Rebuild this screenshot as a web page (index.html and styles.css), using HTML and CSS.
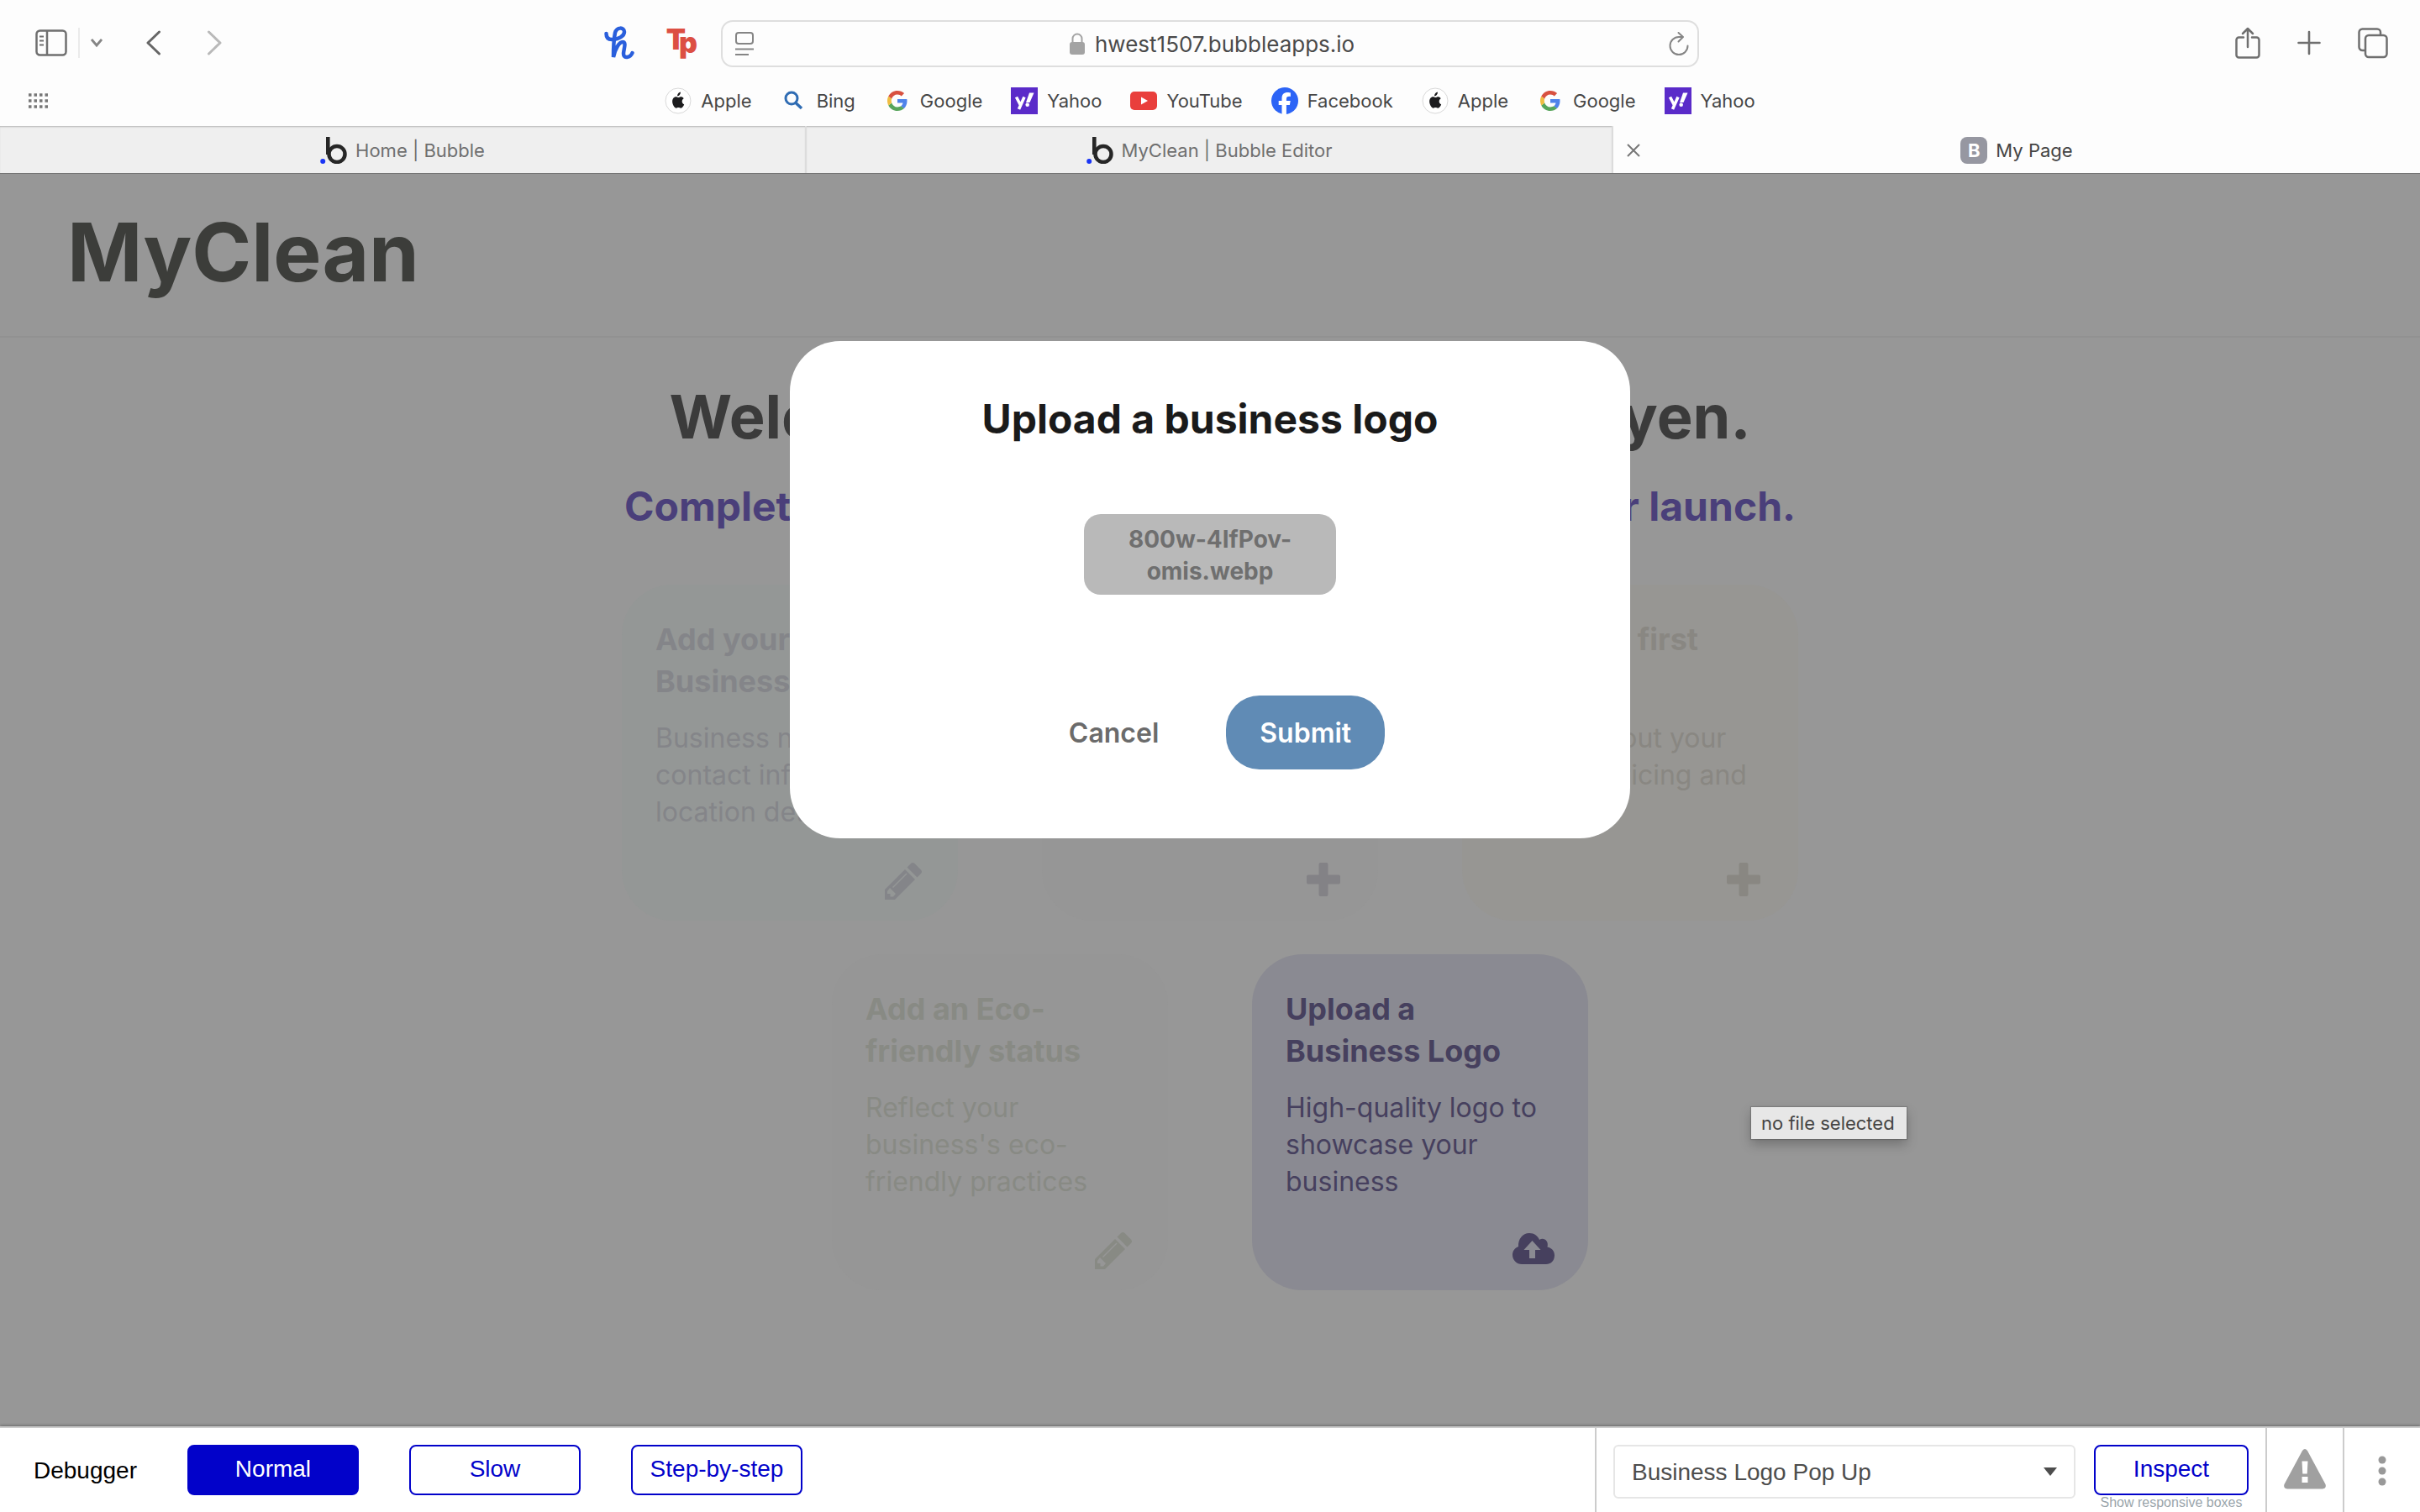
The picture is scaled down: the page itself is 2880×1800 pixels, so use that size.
FILE: index.html
```html
<!DOCTYPE html>
<html lang="en">
<head>
<meta charset="utf-8">
<meta name="viewport" content="width=device-width, initial-scale=1">
<title>My Page</title>
<link rel="stylesheet" href="styles.css">
</head>
<body>
<svg class="defs" width="0" height="0" aria-hidden="true">
  <symbol id="apple" viewBox="0 0 32 32">
    <circle cx="16" cy="16" r="15" fill="#fff" stroke="#d8d8d8" stroke-width="1"/>
    <path fill="#1c1c1e" d="M18.9 5.5c.2 1.400-.4 2.600-1.100 3.500-.7.8-1.700 1.400-2.700 1.300-.1-1.300.5-2.500 1.200-3.300.7-.8 1.800-1.400 2.600-1.500zM22.700 13.300c-1.400.9-2 2-2 3.400 0 1.600.9 2.900 2.500 3.500-.5 1.500-1.600 3.200-2.700 4-.9.7-1.800.4-2.700.1-1-.4-1.800-.4-2.800 0-1 .4-1.800.6-2.700-.2-3-2.700-4.200-8-2.100-11 1.300-1.900 3.400-2.200 5-1.400.9.4 1.500.4 2.400 0 1.800-.8 3.900-.4 5.100 1.600z"/>
  </symbol>
  <symbol id="bing" viewBox="0 0 32 32">
    <circle cx="13" cy="13" r="7" fill="none" stroke="#2f6cb3" stroke-width="3"/>
    <path d="M18 18.500l7 6.500" stroke="#2f6cb3" stroke-width="3.500"/>
  </symbol>
  <symbol id="google" viewBox="-4 -4 32 32">
    <path fill="#4f83ea" d="M23.500 12.300c0-.9-.1-1.500-.2-2.300H12v4.500h6.500c-.2 1.200-.9 2.700-2.400 3.800l3.700 2.900c2.300-2.100 3.700-5.200 3.700-8.900z"/>
    <path fill="#57a55b" d="M12 24c3.200 0 6-1.100 7.900-2.900l-3.800-2.900c-1 .7-2.400 1.200-4.100 1.200-3.200 0-5.800-2.100-6.800-5l-3.900 3C3.300 21.300 7.300 24 12 24z"/>
    <path fill="#f0bd42" d="M5.200 14.400c-.2-.8-.4-1.600-.4-2.400s.1-1.600.4-2.400L1.300 6.600C.5 8.200 0 10.100 0 12s.5 3.800 1.300 5.400z"/>
    <path fill="#d85140" d="M12 4.600c2.300 0 3.800 1 4.700 1.800l3.400-3.300C18 1.200 15.200 0 12 0 7.300 0 3.300 2.700 1.300 6.600l3.900 3c1-2.900 3.600-5 6.800-5z"/>
  </symbol>
  <symbol id="yahoo" viewBox="0 0 32 32">
    <rect width="32" height="32" fill="#5a2bc9"/>
    <path fill="none" stroke="#fff" stroke-width="3.600" d="M6.500 11.500l4.700 9M16 11.500L9.500 26"/>
    <path fill="#fff" d="M22 6.500h5.500l-5 11.500H18z"/><circle cx="19.700" cy="20.700" r="2.300" fill="#fff"/>
  </symbol>
  <symbol id="youtube" viewBox="0 0 32 32">
    <rect y="5" width="32" height="22" rx="5" fill="#e93f3c"/><path d="M13 11.500v9l8-4.500z" fill="#fff"/>
  </symbol>
  <symbol id="facebook" viewBox="0 0 32 32">
    <circle cx="16" cy="16" r="16" fill="#2c64f6"/>
    <path fill="#fff" d="M12.500 32V21H8.700v-5h3.800v-2.600c0-5 2.300-7.300 7.200-7.300.9 0 2.500.2 3.200.4v4.400c-.3 0-.9-.1-1.700-.1-2.400 0-3.300.9-3.300 3.300V16h4.800l-.8 5h-4v11z"/>
  </symbol>
  <symbol id="bubble" viewBox="0 0 32 32">
    <circle cx="20" cy="20.500" r="9.500" fill="none" stroke="#262626" stroke-width="4.500"/>
    <path d="M9.300 0v21" stroke="#262626" stroke-width="4.600"/>
    <circle cx="3.200" cy="29" r="3" fill="#1a35f5"/>
  </symbol>
  <symbol id="pencil" viewBox="0 0 50 50">
    <path fill="currentColor" fill-rule="evenodd" d="M3 50V38L27 14l12 12L15 50zM9 36l-3 4v3h3.500v3.500H13l3-3.500zM28.500 18.500L12 35l1 1 16.500-16.500zM29.500 11.500l4.500-4.400q2-2 4.500 0L46 14.500q2 2.300 0 4.500l-4.500 4.500z"/>
  </symbol>
  <symbol id="plus" viewBox="0 0 50 50">
    <path fill="currentColor" d="M21.500 6h7q2 0 2 2v12.500H43q2 0 2 2v7q0 2-2 2H30.500V44q0 2-2 2h-7q-2 0-2-2V31.500H7q-2 0-2-2v-7q0-2 2-2h12.500V8q0-2 2-2z"/>
  </symbol>
</svg>

<header class="chrome">
  <div class="toolbar">
    <div class="toolbar-left">
      <button class="icon-btn sidebar-btn" aria-label="Show sidebar">
        <svg width="38" height="32" viewBox="0 0 38 32" fill="none" stroke="#6f6f6f" stroke-width="2.500"><rect x="1.500" y="1.500" width="35" height="29" rx="4"/><path d="M14 2v28"/><path d="M5 8.500h5M5 13.500h5M5 18.500h5" stroke-width="2"/></svg>
      </button>
      <span class="divider"></span>
      <button class="icon-btn more-btn" aria-label="Tab groups">
        <svg width="14" height="12" viewBox="0 0 14 12" fill="none" stroke="#858585" stroke-width="2.800"><path d="M1 2l6 7 6-7"/></svg>
      </button>
      <button class="icon-btn back-btn" aria-label="Back">
        <svg width="18" height="30" viewBox="0 0 18 30" fill="none" stroke="#666" stroke-width="3" stroke-linecap="round" stroke-linejoin="round"><path d="M15.500 2L2 15l13.500 13"/></svg>
      </button>
      <button class="icon-btn forward-btn" aria-label="Forward">
        <svg width="18" height="30" viewBox="0 0 18 30" fill="none" stroke="#b9b9b9" stroke-width="3" stroke-linecap="round" stroke-linejoin="round"><path d="M2.500 2L16 15 2.500 28"/></svg>
      </button>
      <div class="extensions">
        <button class="icon-btn" aria-label="Honey">
          <svg width="36" height="40" viewBox="0 0 36 40" fill="none" stroke="#2a5fdc" stroke-width="4.500" stroke-linecap="round"><path d="M2.500 9C2.500 14 5 16 9 16C17 16 24 12 24 7C24 1 15 1 13 8C12 13 11 25 11 37C13 27 18 19 22 19C27 19 23 28 23 33C23 39 31 38 33.500 32"/></svg>
        </button>
        <button class="icon-btn tp" aria-label="Tp extension"><span class="tp-t">T</span><span class="tp-p">p</span></button>
      </div>
    </div>
    <form class="address">
      <button type="button" class="icon-btn" aria-label="Page menu">
        <svg width="24" height="30" viewBox="0 0 24 30" fill="none" stroke="#858585" stroke-width="2"><rect x="2" y="2" width="20" height="13" rx="3"/><path d="M1 21.500h22M1 28h16"/></svg>
      </button>
      <div class="address-text">
        <svg width="18" height="26" viewBox="0 0 18 26"><path d="M3.500 12V7a5.500 5.500 0 0 1 11 0v5" fill="none" stroke="#a3a3a3" stroke-width="2"/><rect y="11" width="18" height="15" rx="3" fill="#a3a3a3"/></svg>
        <input type="text" value="hwest1507.bubbleapps.io" aria-label="Address">
      </div>
      <button type="button" class="icon-btn" aria-label="Reload">
        <svg width="24" height="30" viewBox="0 0 24 30" fill="none" stroke="#858585" stroke-width="2" stroke-linecap="round" stroke-linejoin="round"><path d="M22.500 17.500a10.500 10.500 0 1 1-10.500-10.500h4.500M11.500 2l5.500 5-5.500 5.500"/></svg>
      </button>
    </form>
    <div class="toolbar-right">
      <button class="icon-btn" aria-label="Share">
        <svg width="30" height="38" viewBox="0 0 30 38" fill="none" stroke="#6f6f6f" stroke-width="2.500" stroke-linecap="round" stroke-linejoin="round"><path d="M10 12.500H4.500a3 3 0 0 0-3 3v18a3 3 0 0 0 3 3h21a3 3 0 0 0 3-3v-18a3 3 0 0 0-3-3H20M15 24V2M9 8l6-6 6 6"/></svg>
      </button>
      <button class="icon-btn" aria-label="New tab">
        <svg width="28" height="38" viewBox="0 0 28 38" fill="none" stroke="#6f6f6f" stroke-width="2.600" stroke-linecap="round"><path d="M14 6v26M1.500 19h25"/></svg>
      </button>
      <button class="icon-btn" aria-label="Tab overview">
        <svg width="36" height="38" viewBox="0 0 36 38" fill="none" stroke="#6f6f6f" stroke-width="2.500"><path d="M9 28H5.500a4 4 0 0 1-4-4V6.500a4 4 0 0 1 4-4H23a4 4 0 0 1 4 4V10"/><rect x="9" y="10" width="25.500" height="26" rx="4"/></svg>
      </button>
    </div>
  </div>

  <div class="bookmark-row">
    <button class="icon-btn grid-btn" aria-label="Start page">
      <svg width="24" height="18" viewBox="0 0 24 18" fill="none" stroke="#777" stroke-width="3.500" stroke-dasharray="3.500 3"><path d="M0 2h24M0 9h24M0 16h24"/></svg>
    </button>
    <nav class="bookmarks" aria-label="Favourites">
      <a href="#"><svg><use href="#apple"/></svg>Apple</a>
      <a href="#"><svg><use href="#bing"/></svg>Bing</a>
      <a href="#"><svg><use href="#google"/></svg>Google</a>
      <a href="#"><svg><use href="#yahoo"/></svg>Yahoo</a>
      <a href="#"><svg><use href="#youtube"/></svg>YouTube</a>
      <a href="#"><svg><use href="#facebook"/></svg>Facebook</a>
      <a href="#"><svg><use href="#apple"/></svg>Apple</a>
      <a href="#"><svg><use href="#google"/></svg>Google</a>
      <a href="#"><svg><use href="#yahoo"/></svg>Yahoo</a>
    </nav>
  </div>

  <nav class="tabs" aria-label="Tabs">
    <div class="tab"><a href="#"><svg><use href="#bubble"/></svg>Home | Bubble</a></div>
    <div class="tab"><a href="#"><svg><use href="#bubble"/></svg>MyClean | Bubble Editor</a></div>
    <div class="tab active">
      <button class="icon-btn" aria-label="Close tab"><svg width="16" height="16" viewBox="0 0 16 16" stroke="#777" stroke-width="2"><path d="M1 1l14 14M15 1L1 15"/></svg></button>
      <a href="#"><span class="favicon">B</span>My Page</a>
    </div>
  </nav>
</header>

<div class="viewport">
  <div class="site-header"><h1>MyClean</h1></div>
  <main class="content">
    <h2>Welcome to MyClean, Anna Nguyen.</h2>
    <p class="subtitle">Complete these required steps to get ready for your launch.</p>
    <div class="cards">
      <article class="card card-info">
        <h3>Add your Business info</h3>
        <p>Business name, contact info and location details</p>
        <svg><use href="#pencil"/></svg>
      </article>
      <article class="card card-area" aria-label="Add your service area">
        <svg><use href="#plus"/></svg>
      </article>
      <article class="card card-service">
        <h3>Add your first service</h3>
        <p>Details about your service, pricing and extras</p>
        <svg><use href="#plus"/></svg>
      </article>
      <article class="card card-eco">
        <h3>Add an Eco-friendly status</h3>
        <p>Reflect your business's eco-friendly practices</p>
        <svg><use href="#pencil"/></svg>
      </article>
      <article class="card card-logo">
        <h3>Upload a Business Logo</h3>
        <p>High-quality logo to showcase your business</p>
        <svg viewBox="0 0 50 50"><path fill="currentColor" fill-rule="evenodd" d="M11 44A11 11 0 0 1 0 33c0-5 3-8.500 7-10C6.500 14 12 7 20 7c6 0 10 3.500 12 8 5-3.500 11.500 1 9.500 8.500C46.500 24.500 50 28 50 33.500 50 40 45.500 44 40 44zM20 37h7V27h6.500L23.500 16 13.500 27H20z"/></svg>
      </article>
    </div>
  </main>

  <div class="overlay">
    <form class="modal" role="dialog" aria-labelledby="modal-title">
      <h2 id="modal-title">Upload a business logo</h2>
      <label class="file-box">800w-4IfPov-omis.webp<input type="file"></label>
      <div class="modal-actions">
        <button type="button" class="cancel">Cancel</button>
        <button type="button" class="submit">Submit</button>
      </div>
    </form>
  </div>
  <div class="tooltip" role="tooltip">no file selected</div>
</div>

<footer class="debugger">
  <div class="speed">
    <span class="debug-title">Debugger</span>
    <button class="debug-btn selected">Normal</button>
    <button class="debug-btn">Slow</button>
    <button class="debug-btn">Step-by-step</button>
  </div>
  <div class="inspector">
    <div class="picker">
      <select aria-label="Element"><option>Business Logo Pop Up</option></select>
      <svg width="16" height="10" viewBox="0 0 16 10"><path d="M0 0h16L8 10z" fill="#4d4d4d"/></svg>
    </div>
    <div class="inspect">
      <button class="debug-btn">Inspect</button>
      <a href="#">Show responsive boxes</a>
    </div>
  </div>
  <button class="issues" aria-label="Issues">
    <svg width="50" height="48" viewBox="0 0 50 48"><path fill="#a0a0a0" fill-rule="evenodd" d="M22 2q3-4 6 0l21.500 40q1.500 5-3.500 5.500H4Q-1 47 .5 42zM21.500 14.500l.8 15h5.400l.8-15zM21.500 33v7h7v-7z"/></svg>
  </button>
  <button class="menu" aria-label="More">
    <svg width="10" height="36" viewBox="0 0 10 36" fill="#999"><circle cx="5" cy="5" r="4.500"/><circle cx="5" cy="18" r="4.500"/><circle cx="5" cy="31" r="4.500"/></svg>
  </button>
</footer>
</body>
</html>
```
FILE: styles.css
```css
* { box-sizing: border-box; }

body {
  margin: 0;
  min-height: 100vh;
  display: flex;
  flex-direction: column;
  font-family: Inter, "Liberation Sans", sans-serif;
  background: #fff;
}

h1, h2, h3, p { margin: 0; }
a { color: inherit; text-decoration: none; }
button, input, select { font: inherit; color: inherit; margin: 0; }
.defs { position: absolute; }

.icon-btn {
  display: flex;
  align-items: center;
  padding: 0;
  border: 0;
  background: none;
}

/* Browser chrome */
.chrome {
  background: #fdfdfd;
  color: #474747;
  font-size: 22px;
  border-bottom: 1px solid #747474;
}

.toolbar {
  display: grid;
  grid-template-columns: 1fr minmax(400px, 1164px) 1fr;
  align-items: center;
  padding-top: 24px;
}

.toolbar-left { display: flex; align-items: center; padding: 0 28px 2px 42px; height: 52px; }
.divider { width: 2px; height: 36px; margin: 0 13px; background: #ebebeb; }
.back-btn { margin-left: 52px; }
.forward-btn { margin-left: 54px; }
.extensions { display: flex; align-items: center; gap: 38px; margin-left: auto; }
.tp { color: #dc4f43; font-weight: 900; height: 40px; align-items: flex-start; }
.tp-t { font-size: 34px; line-height: 32px; }
.tp-p { font-size: 34px; line-height: 40px; margin-left: -8px; }

.address {
  display: flex;
  align-items: center;
  justify-content: space-between;
  height: 56px;
  padding: 0 10px 0 14px;
  border: 2px solid #dedede;
  border-radius: 14px;
}
.address-text { display: flex; align-items: center; gap: 12px; color: #4a4a4a; }
.address input {
  width: 308px;
  padding: 2px 0 0;
  border: 0;
  background: none;
  font-size: 26px;
  line-height: 36px;
}

.toolbar-right { display: flex; align-items: center; justify-content: flex-end; gap: 44px; padding: 0 38px 2px 0; }

.bookmark-row {
  display: grid;
  grid-template-columns: 1fr auto 1fr;
  align-items: center;
  padding: 24px 0 14px;
}
.grid-btn { padding-left: 34px; }
.bookmarks { display: flex; gap: 34px; }
.bookmarks a { display: flex; align-items: center; gap: 11px; line-height: 32px; }
.bookmarks svg, .tab a svg { width: 32px; height: 32px; }

.tabs { display: grid; grid-template-columns: repeat(3, 1fr); height: 56px; }
.tab {
  display: flex;
  align-items: center;
  justify-content: center;
  padding-top: 2px;
  background: #efefef;
  color: #6f6f6f;
  border-right: 2px solid #dcdcdc;
  box-shadow: inset 0 2px 2px -1px #b4b4b4;
}
.tab a { display: flex; align-items: center; gap: 10px; line-height: 32px; }
.tab.active {
  display: grid;
  grid-template-columns: 1fr auto 1fr;
  padding: 2px 16px 0;
  background: #fdfdfd;
  color: #444;
  border: 0;
  box-shadow: none;
}
.favicon {
  width: 32px;
  height: 32px;
  border-radius: 8px;
  background: #9697a1;
  color: #fff;
  font-weight: 700;
  text-align: center;
}

/* Web page */
.viewport {
  position: relative;
  flex: 1;
  background: #979797;
  color: #3b3b3b;
}
.site-header { padding: 35px 80px 42px; border-bottom: 2px solid #919191; }
.site-header h1 { font-size: 96px; line-height: 116px; font-weight: 700; color: #3c3d3a; }

.content { padding: 50px 40px 160px; text-align: center; }
.content h2 { font-size: 72px; line-height: 88px; font-weight: 700; }
.subtitle { margin-top: 34px; font-size: 48px; line-height: 58px; font-weight: 700; color: #4a3f7a; }

.cards {
  display: flex;
  flex-wrap: wrap;
  justify-content: center;
  gap: 40px 100px;
  max-width: 1400px;
  margin: 64px auto 0;
  text-align: left;
}
.card {
  display: flex;
  flex-direction: column;
  width: 400px;
  height: 400px;
  padding: 40px 40px 25px;
  border-radius: 60px;
}
.card h3 { font-size: 36px; line-height: 50px; font-weight: 700; }
.card p { margin-top: 21px; font-size: 32px; line-height: 44px; }
.card svg { width: 50px; height: 50px; margin: auto 0 0 auto; }
.card-info { background: #949796; color: #848589; }
.card-area { background: #969696; color: #838286; }
.card-service { background: #979693; color: #898782; }
.card-eco { background: #969696; color: #888a84; }
.card-logo { background: #8a8a92; color: #46405e; }

.overlay {
  position: absolute;
  inset: 0;
  display: flex;
  justify-content: center;
  align-items: flex-start;
  padding: 199px 40px 40px;
}
.modal {
  width: 1000px;
  padding: 64px 60px 82px;
  border-radius: 60px;
  background: #fff;
  display: flex;
  flex-direction: column;
  align-items: center;
}
.modal h2 { font-size: 48px; line-height: 58px; font-weight: 700; color: #1a1a1a; }
.file-box {
  width: 300px;
  margin-top: 84px;
  padding: 11px 40px 9px;
  border-radius: 20px;
  background: #b9b9b9;
  color: #6f6f6f;
  font-size: 28px;
  line-height: 38px;
  font-weight: 700;
  text-align: center;
}
.file-box input { position: absolute; width: 1px; height: 1px; opacity: 0; }
.modal-actions { display: flex; gap: 40px; margin-top: 120px; }
.modal-actions button {
  height: 88px;
  padding: 0 40px;
  border: 0;
  border-radius: 40px;
  background: none;
  font-size: 32px;
  font-weight: 600;
}
.modal-actions .cancel { color: #6b6b6b; }
.modal-actions .submit { background: #608bb5; color: #fff; }

.tooltip {
  position: absolute;
  left: 2084px;
  top: 1111px;
  padding: 4px 14px 4px 12px;
  background: #e7e7e7;
  color: #444;
  font-size: 22px;
  line-height: 30px;
  box-shadow: 0 0 1px 1px rgba(0, 0, 0, .15), 0 6px 14px rgba(0, 0, 0, .25);
}

/* Debugger bar */
.debugger {
  position: relative;
  display: flex;
  height: 102px;
  border-top: 2px solid #ccc;
  box-shadow: 0 -1px 3px rgba(0, 0, 0, .3);
  background: #fff;
  font-family: "Liberation Sans", Arial, sans-serif;
  font-size: 28px;
}
.speed { flex: 1; display: flex; align-items: flex-start; gap: 60px; padding: 20px 40px; }
.debug-title { line-height: 62px; color: #000; }
.debug-btn {
  width: 204px;
  height: 60px;
  padding: 0 0 2px;
  border: 2px solid #0202ca;
  border-radius: 8px;
  background: #fff;
  color: #0202ca;
}
.debug-btn.selected { background: #0202ca; color: #fff; }
.inspector { display: flex; align-items: flex-start; gap: 22px; padding: 20px 20px 0; border-left: 2px solid #ccc; }
.picker { display: grid; align-items: center; }
.picker > * { grid-area: 1 / 1; }
.picker svg { justify-self: end; margin-right: 22px; pointer-events: none; }
.picker select {
  appearance: none;
  width: 550px;
  height: 64px;
  padding: 0 20px;
  border: 2px solid #e6e6e6;
  border-radius: 6px;
  background: #fff;
  color: #4d4d4d;
}
.inspect { display: flex; flex-direction: column; align-items: center; }
.inspect .debug-btn { width: 184px; }
.inspect a { font-size: 16px; line-height: 18px; color: #9aa5ab; }
.issues, .menu { display: flex; justify-content: center; width: 92px; border: 0; border-left: 2px solid #ccc; background: #fff; padding: 0; }
.issues { padding-top: 25px; align-items: flex-start; }
.menu { padding-top: 33px; align-items: flex-start; }
```
